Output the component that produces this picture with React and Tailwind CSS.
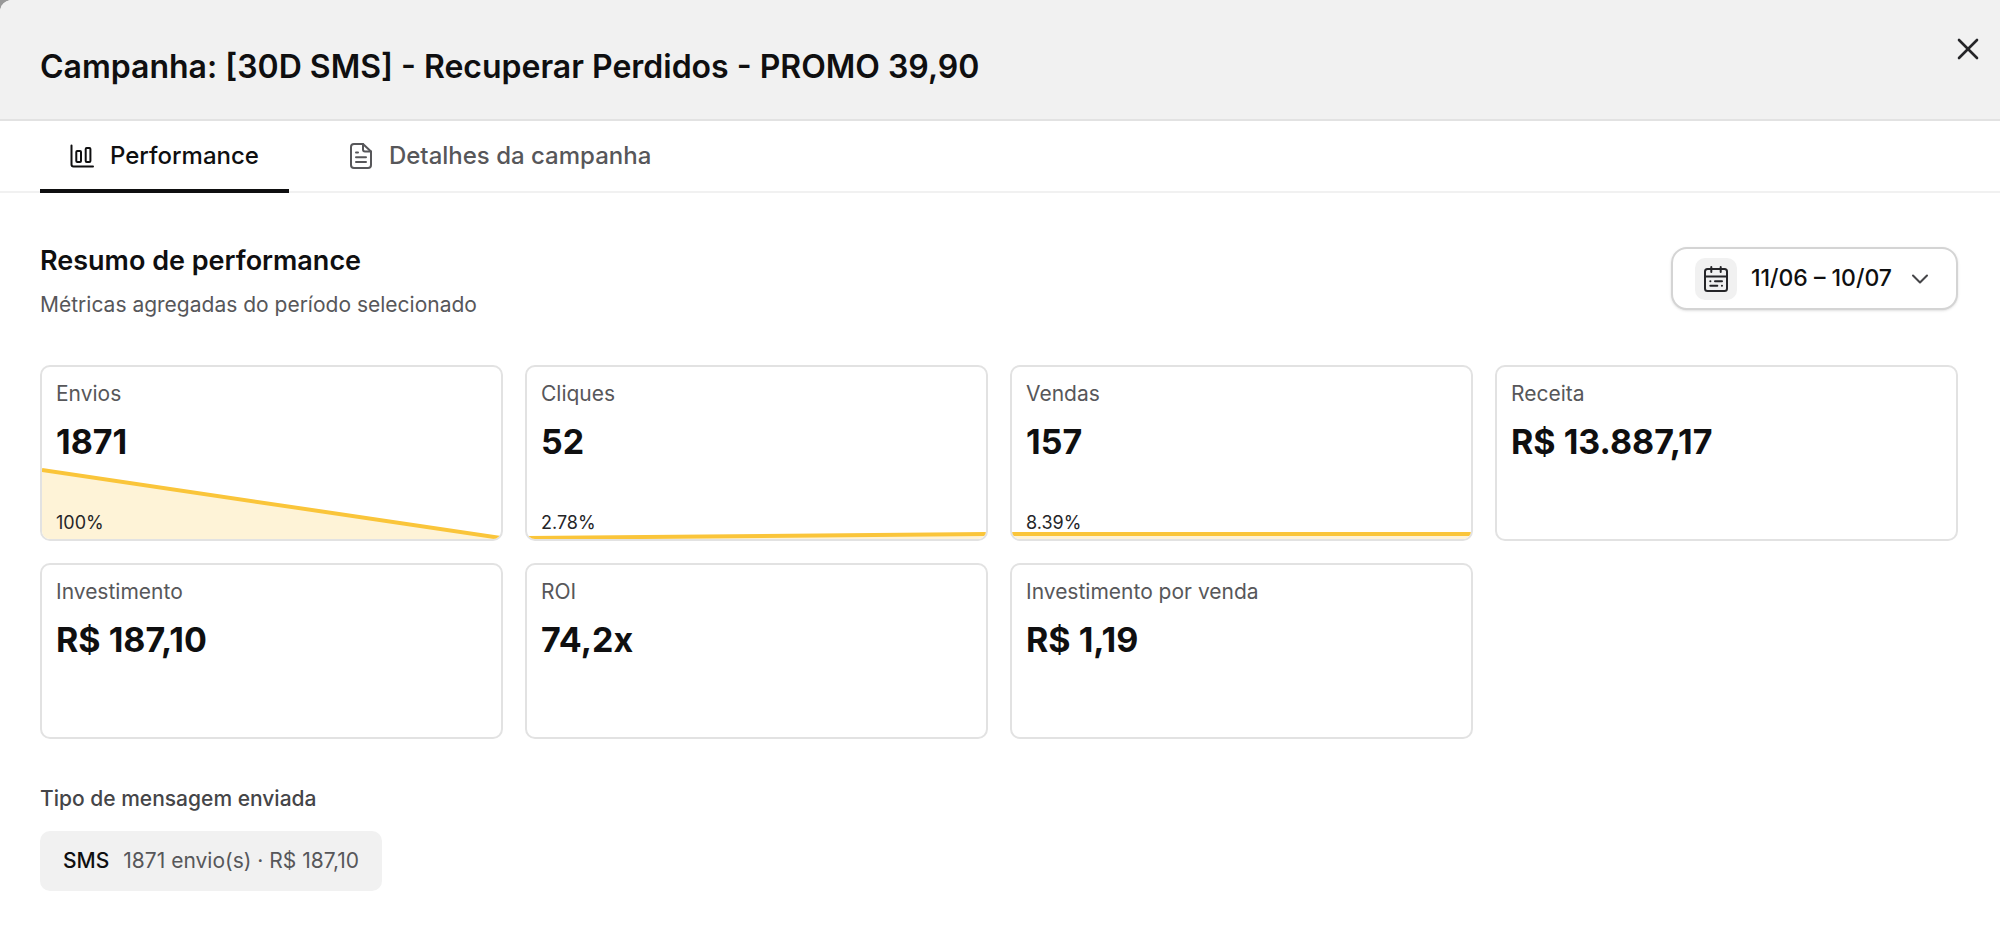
// src/components/CampaignPerformance.jsx
import { useState } from 'react';
import { X, ChevronDown } from 'lucide-react';

const metrics = [
  { label: 'Envios', value: '1871', rate: '100%', from: 3, to: 71 },
  { label: 'Cliques', value: '52', rate: '2.78%', from: 71, to: 67 },
  { label: 'Vendas', value: '157', rate: '8.39%', from: 67, to: 67 },
  { label: 'Receita', value: 'R$ 13.887,17' },
  { label: 'Investimento', value: 'R$ 187,10' },
  { label: 'ROI', value: '74,2x' },
  { label: 'Investimento por venda', value: 'R$ 1,19' },
];

const ChartIcon = () => (
  <svg className="w-6 h-6" viewBox="0 0 24 24" fill="none" stroke="currentColor" strokeWidth="2" strokeLinecap="round" strokeLinejoin="round" aria-hidden="true">
    <path d="M1.500 1.500v19a2 2 0 0 0 2 2H23" />
    <rect x="6.300" y="7" width="4.700" height="11" rx="1" />
    <rect x="15.700" y="4" width="4.700" height="14" rx="1" />
  </svg>
);

const DocumentIcon = () => (
  <svg className="w-6 h-7" viewBox="0 0 24 28" fill="none" stroke="currentColor" strokeWidth="2" strokeLinecap="round" strokeLinejoin="round" aria-hidden="true">
    <path d="M14 2H5a3 3 0 0 0-3 3v18a3 3 0 0 0 3 3h14a3 3 0 0 0 3-3V9.500z" />
    <path d="M14 2v5.500a2 2 0 0 0 2 2h6" />
    <path d="M7 10.500h2M7 15.200h10M7 20h10" />
  </svg>
);

const CalendarIcon = () => (
  <svg className="w-7 h-7" viewBox="0 0 28 28" fill="none" stroke="currentColor" strokeWidth="2" strokeLinecap="round" strokeLinejoin="round" aria-hidden="true">
    <rect x="3" y="4" width="22" height="22" rx="2.500" />
    <path d="M9.300 2v5M18.700 2v5M3 11.500h22" />
    <path d="M8.300 16.300h.1M13 16.300h7M8.300 20.800h7M19.900 20.800h.1" />
  </svg>
);

const Sparkline = ({ from, to }) => (
  <svg className="absolute inset-x-0 bottom-0 w-full h-18" viewBox="0 0 100 72" preserveAspectRatio="none" aria-hidden="true">
    <path d={`M0 ${from}L100 ${to}V72H0Z`} fill="#fef3d7" />
    <path d={`M0 ${from}L100 ${to}`} stroke="#fac53a" strokeWidth="4" vectorEffect="non-scaling-stroke" />
  </svg>
);

const MetricCard = ({ metric }) => (
  <div className="relative flex flex-col h-44 px-3.5 pt-[13px] pb-1 overflow-hidden rounded-[10px] border-2 border-[#e2e2e2] bg-white">
    {metric.rate && <Sparkline from={metric.from} to={metric.to} />}
    <p className="text-[21px] leading-7 text-[#57575a]">{metric.label}</p>
    <p className="mt-3 text-[34px] leading-11 font-bold">{metric.value}</p>
    {metric.rate && <p className="relative mt-auto text-[18px] leading-6 text-[#252528]">{metric.rate}</p>}
  </div>
);

const Tab = ({ active, icon, children, onClick }) => (
  <button
    type="button"
    role="tab"
    aria-selected={active}
    onClick={onClick}
    className={`flex items-center gap-4 h-18 px-[30px] pt-0.5 -mb-0.5 border-b-4 text-[24px] leading-8 font-medium ${
      active ? 'border-[#0f0f10] text-[#0f0f10]' : 'border-transparent text-[#57575a]'
    }`}
  >
    {icon}
    {children}
  </button>
);

const App = () => {
  const [tab, setTab] = useState('performance');

  return (
    <div className="min-h-screen bg-[#999999] font-['Inter',sans-serif] text-[#0f0f10]">
      <div role="dialog" aria-labelledby="campaign-title" className="min-h-screen overflow-hidden rounded-tl-xl bg-white">
        {/* Header */}
        <header className="flex items-start justify-between pl-10 pr-3.5 pt-[31px] pb-7 bg-[#f1f1f1] border-b-2 border-[#e2e2e2]">
          <h1 id="campaign-title" className="pt-3 text-[32px] leading-12 font-semibold">
            Campanha: [30D SMS] - Recuperar Perdidos - PROMO 39,90
          </h1>
          <button type="button" aria-label="Fechar" className="text-[#252528]">
            <X className="w-9 h-9" strokeWidth={1.75} />
          </button>
        </header>

        {/* Abas */}
        <div role="tablist" className="flex gap-[30px] px-10 border-b-2 border-[#f1f1f1]">
          <Tab active={tab === 'performance'} icon={<ChartIcon />} onClick={() => setTab('performance')}>
            Performance
          </Tab>
          <Tab active={tab === 'details'} icon={<DocumentIcon />} onClick={() => setTab('details')}>
            Detalhes da campanha
          </Tab>
        </div>

        <main className="pl-10 pr-[42px] py-12">
          {/* Resumo */}
          <div className="flex items-start justify-between">
            <div>
              <h2 className="text-[27px] leading-10 font-semibold">Resumo de performance</h2>
              <p className="mt-2 text-[21px] leading-8 text-[#57575a]">Métricas agregadas do período selecionado</p>
            </div>
            <button
              type="button"
              aria-haspopup="dialog"
              className="flex items-center h-[63px] mt-1.5 px-[22px] rounded-2xl border-2 border-[#d4d4d4] bg-white shadow-sm text-[23px] font-medium"
            >
              <span className="flex items-center justify-center w-[42px] h-[42px] rounded-[10px] bg-[#f1f1f1] text-[#252528]">
                <CalendarIcon />
              </span>
              <span className="mx-3.5">11/06 – 10/07</span>
              <ChevronDown className="w-7 h-7 text-[#454548]" strokeWidth={1.75} />
            </button>
          </div>

          <div className="grid grid-cols-4 gap-[22px] mt-11">
            {metrics.map((metric) => (
              <MetricCard key={metric.label} metric={metric} />
            ))}
          </div>

          {/* Tipo de mensagem */}
          <section className="mt-11">
            <h3 className="text-[21px] leading-8 font-medium text-[#454548]">Tipo de mensagem enviada</h3>
            <div className="inline-flex items-center gap-3.5 h-15 mt-4 px-[23px] rounded-[10px] bg-[#f1f1f1] text-[21px]">
              <span className="font-medium">SMS</span>
              <span className="text-[#57575a]">1871 envio(s) · R$ 187,10</span>
            </div>
          </section>
        </main>
      </div>
    </div>
  );
};

export default App;
